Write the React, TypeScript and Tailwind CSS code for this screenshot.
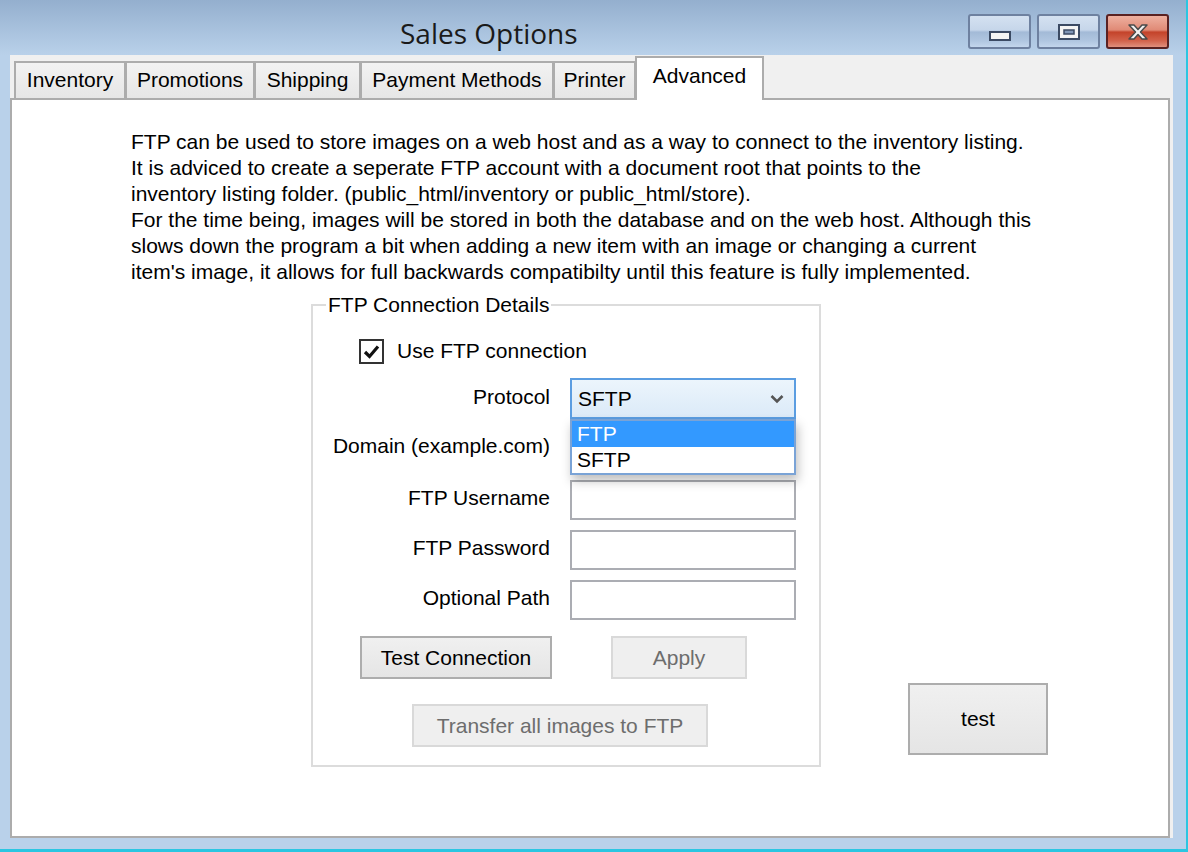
import React from "react";

const TABS = [
  { label: "Inventory", w: "w-[112px]" },
  { label: "Promotions", w: "w-[130px]" },
  { label: "Shipping", w: "w-[107px]" },
  { label: "Payment Methods", w: "w-[194px]" },
  { label: "Printer", w: "w-[83px]" },
] as const;

const INFO = [
  "FTP can be used to store images on a web host and as a way to connect to the inventory listing.",
  "It is adviced to create a seperate FTP account with a document root that points to the",
  "inventory listing folder. (public_html/inventory or public_html/store).",
  "For the time being, images will be stored in both the database and on the web host. Although this",
  "slows down the program a bit when adding a new item with an image or changing a current",
  "item's image, it allows for full backwards compatibilty until this feature is fully implemented.",
];

function CaptionButton({ kind }: { kind: "min" | "max" | "close" }) {
  const close = kind === "close";
  return (
    <div
      className={`flex h-[35px] w-[63px] items-center justify-center rounded-[3px] border-2 ${
        close
          ? "border-[#5a2222] bg-[linear-gradient(to_bottom,#eeb0a0_0%,#e08a76_45%,#c4432a_52%,#d2634c_80%,#e0907e_100%)]"
          : "border-[#6e81a0] bg-[linear-gradient(to_bottom,#d4e1f1_0%,#c6d6ea_45%,#a3bad7_52%,#b0c6e0_80%,#c3d6ec_100%)]"
      }`}
    >
      {kind === "min" && (
        <svg width="22" height="10" viewBox="0 0 22 10" className="mt-[8px]">
          <rect x="1" y="1" width="20" height="8" fill="#f4f4f4" stroke="#3b4a63" strokeWidth="2" />
        </svg>
      )}
      {kind === "max" && (
        <svg width="22" height="16" viewBox="0 0 22 16">
          <rect x="1" y="1" width="20" height="14" fill="#f4f4f4" stroke="#3b4a63" strokeWidth="2" />
          <rect x="6" y="6" width="10" height="4" fill="#7f95b5" stroke="#3b4a63" strokeWidth="1.5" />
        </svg>
      )}
      {close && (
        <svg width="24" height="18" viewBox="0 0 24 18">
          <path
            d="M3 2 L8 2 L12 6.5 L16 2 L21 2 L14.5 9 L21 16 L16 16 L12 11.5 L8 16 L3 16 L9.5 9 Z"
            fill="#f2f2f2"
            stroke="#4a4a4a"
            strokeWidth="1.5"
            strokeLinejoin="round"
          />
        </svg>
      )}
    </div>
  );
}

function TextField() {
  return <div className="h-[40px] w-[226px] border-2 border-[#abadb3] bg-white" />;
}

function Row({
  label,
  mt,
  children,
}: {
  label: string;
  mt: string;
  children: React.ReactNode;
}) {
  return (
    <div className={`flex items-center ${mt}`}>
      <div className="w-[238px] -mt-[4px] pr-[1px] text-right whitespace-nowrap">{label}</div>
      <div className="ml-[19px]">{children}</div>
    </div>
  );
}

function WinButton({
  children,
  disabled,
  className,
}: {
  children: React.ReactNode;
  disabled?: boolean;
  className: string;
}) {
  return (
    <div
      className={`flex items-center justify-center border-2 ${
        disabled
          ? "border-[#d9d9d9] bg-[#efefef] text-[#6d6d6d]"
          : "border-[#adadad] bg-[linear-gradient(to_bottom,#f0f0f0,#e5e5e5)] text-black"
      } ${className}`}
    >
      {children}
    </div>
  );
}

export default function App() {
  return (
    <div className="h-[852px] w-[1188px] overflow-hidden bg-white">
      <div className="h-[852px] w-[1188px] border-b-[3px] border-r-2 border-[#2bc6e1] bg-[#b9d1ea] font-['Liberation_Sans',Arial,sans-serif] text-[21px] leading-[26px] text-black">
        {/* title bar */}
        <div className="flex h-[55px] bg-[linear-gradient(to_bottom,#94afce,#b9d1ea)]">
          <div className="ml-[400px] mt-[14px] font-['Open_Sans',sans-serif] text-[28px] leading-[38px] text-[#1a1a1a]">
            Sales Options
          </div>
          <div className="ml-auto mr-[17px] mt-[14px] flex gap-[6px]">
            <CaptionButton kind="min" />
            <CaptionButton kind="max" />
            <CaptionButton kind="close" />
          </div>
        </div>

        {/* client */}
        <div className="ml-[10px] h-[783px] w-[1163px] bg-[#f0f0f0] pt-[1px]">
          <div className="flex h-[42px] items-end pl-[4px]">
            {TABS.map((t, i) => (
              <div
                key={t.label}
                className={`flex h-[37px] items-center justify-center border-2 border-b-0 border-[#acacac] bg-[linear-gradient(to_bottom,#f2f2f2,#e6e6e6)] pb-[2px] ${t.w} ${
                  i > 0 ? "-ml-[1px]" : ""
                }`}
              >
                {t.label}
              </div>
            ))}
            <div className="relative z-10 -mb-[2px] -ml-[1px] flex h-[44px] w-[129px] justify-center border-2 border-b-0 border-[#acacac] bg-white pt-[5px]">
              Advanced
            </div>
          </div>

          {/* tab page */}
          <div className="h-[740px] w-[1160px] border-2 border-[#acacac] bg-white">
            <div className="ml-[119px] mt-[29px]">
              {INFO.map((line) => (
                <div key={line} className="whitespace-nowrap">
                  {line}
                </div>
              ))}
            </div>

            <div className="flex items-start">
              <fieldset className="ml-[299px] mt-[7px] w-[510px] border-2 border-[#dcdcdc] pb-[18px]">
                <legend className="ml-[13px] px-[2px]">FTP Connection Details</legend>

                <div className="ml-[46px] mt-[20px] flex items-center gap-[13px]">
                  <div className="flex h-[25px] w-[25px] items-center justify-center border-2 border-[#333] bg-white">
                    <svg width="17" height="15" viewBox="0 0 17 15">
                      <path d="M2 8 L6.5 12.5 L15 2.5" fill="none" stroke="#111" strokeWidth="3.2" />
                    </svg>
                  </div>
                  <span>Use FTP connection</span>
                </div>

                <Row label="Protocol" mt="mt-[14px]">
                  <div className="relative">
                    <div className="flex h-[41px] w-[226px] items-center border-2 border-[#5b9de1] bg-[linear-gradient(to_bottom,#ecf5fc,#dbeaf8)] pl-[6px] pr-[10px]">
                      <span>SFTP</span>
                      <svg width="14" height="10" viewBox="0 0 14 10" className="ml-auto">
                        <path d="M1.5 2 L7 7.5 L12.5 2" fill="none" stroke="#555" strokeWidth="2.6" />
                      </svg>
                    </div>
                    <div className="absolute left-0 top-[41px] z-20 h-[56px] w-[226px] border-2 border-[#7aa3d6] bg-white shadow-[2px_6px_10px_rgba(0,0,0,0.25)]">
                      <div className="h-[26px] bg-[#3399ff] pl-[5px] text-white">FTP</div>
                      <div className="h-[26px] pl-[5px]">SFTP</div>
                    </div>
                  </div>
                </Row>

                <Row label="Domain (example.com)" mt="mt-[9px]">
                  <TextField />
                </Row>
                <Row label="FTP Username" mt="mt-[12px]">
                  <TextField />
                </Row>
                <Row label="FTP Password" mt="mt-[10px]">
                  <TextField />
                </Row>
                <Row label="Optional Path" mt="mt-[10px]">
                  <TextField />
                </Row>

                <div className="ml-[47px] mt-[16px] flex gap-[59px]">
                  <WinButton className="h-[43px] w-[192px]">Test Connection</WinButton>
                  <WinButton disabled className="h-[43px] w-[136px]">
                    Apply
                  </WinButton>
                </div>

                <WinButton disabled className="ml-[99px] mt-[25px] h-[43px] w-[296px]">
                  Transfer all images to FTP
                </WinButton>
              </fieldset>

              <WinButton className="ml-[87px] mt-[398px] h-[72px] w-[140px]">test</WinButton>
            </div>
          </div>
        </div>
      </div>
    </div>
  );
}
